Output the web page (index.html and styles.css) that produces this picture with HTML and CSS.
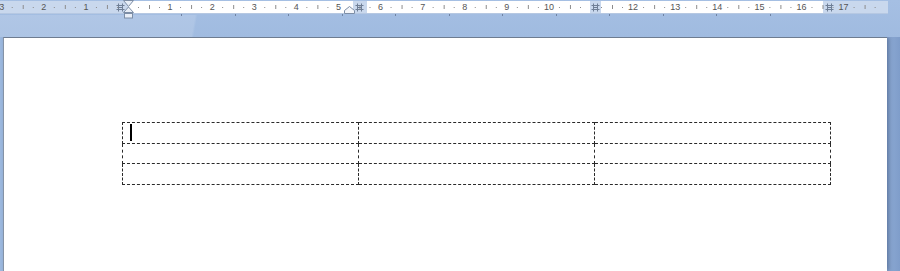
FILE: index.html
```html
<!DOCTYPE html>
<html>
<head>
<meta charset="utf-8">
<link rel="stylesheet" href="styles.css">
</head>
<body>
<div class="topbar">
  <div class="ruler">
    <div class="nums">
      <span>3</span><span>2</span><span>1</span><span></span><span>1</span><span>2</span><span>3</span><span>4</span><span>5</span><span>6</span><span>7</span><span>8</span><span>9</span><span>10</span><span></span><span>12</span><span>13</span><span>14</span><span>15</span><span>16</span><span>17</span>
    </div>
    <svg class="colmark m1" width="9" height="9" viewBox="0 0 9 9"><path d="M2.5 0.5V8.5M6.5 0.5V8.5M0.5 2.5H8.5M0.5 6.5H8.5M2.5 4.5H6.5" stroke="#6f7f96" stroke-width="1" fill="none"/></svg>
    <svg class="colmark m2" width="9" height="9" viewBox="0 0 9 9"><path d="M2.5 0.5V8.5M6.5 0.5V8.5M0.5 2.5H8.5M0.5 6.5H8.5M2.5 4.5H6.5" stroke="#6f7f96" stroke-width="1" fill="none"/></svg>
    <svg class="colmark m3" width="9" height="9" viewBox="0 0 9 9"><path d="M2.5 0.5V8.5M6.5 0.5V8.5M0.5 2.5H8.5M0.5 6.5H8.5M2.5 4.5H6.5" stroke="#6f7f96" stroke-width="1" fill="none"/></svg>
    <svg class="colmark m4" width="9" height="9" viewBox="0 0 9 9"><path d="M2.5 0.5V8.5M6.5 0.5V8.5M0.5 2.5H8.5M0.5 6.5H8.5M2.5 4.5H6.5" stroke="#6f7f96" stroke-width="1" fill="none"/></svg>
    <svg class="hourglass" width="11" height="19" viewBox="0 0 11 19"><path d="M0.5 0.5H10.5L5.5 6.5Z" fill="#e8eef7" stroke="#7d8ea6"/><path d="M5.5 7L0.5 12.5H10.5Z" fill="#e8eef7" stroke="#7d8ea6"/><rect x="1.5" y="13.5" width="8" height="4.5" fill="#e8eef7" stroke="#7d8ea6"/></svg>
    <svg class="hanging" width="11" height="8" viewBox="0 0 11 8"><path d="M0.5 7.5V4.5L5.5 0.5L10.5 4.5V7.5Z" fill="#f4f6fa" stroke="#7d8ea6"/></svg>
  </div>
  <div class="tabs"></div>
</div>
<div class="page">
  <table class="grid">
    <tr class="r1"><td><span class="caret"></span></td><td></td><td></td></tr>
    <tr class="r2"><td></td><td></td><td></td></tr>
    <tr class="r3"><td></td><td></td><td></td></tr>
  </table>
</div>
</body>
</html>
```
FILE: styles.css
```css
html, body {
  margin: 0;
  padding: 0;
}
body {
  width: 900px;
  height: 271px;
  overflow: hidden;
  background: linear-gradient(to right, #9db9df 0, #a3bee2 60%, #9cb8de 97%, #7f9dca 100%);
  font-family: "Liberation Sans", Arial, sans-serif;
}
.topbar {
  height: 37px;
  background: linear-gradient(to bottom, #a5bfe3 0, #a0bbe0 100%);
  position: relative;
}
.topbar::before {
  content: "";
  position: absolute;
  left: 0;
  top: 15px;
  width: 240px;
  height: 22px;
  background: linear-gradient(100deg, rgba(255,255,255,0.14) 0 80%, rgba(255,255,255,0) 81%);
}
.ruler {
  position: relative;
  top: 1px;
  width: 888px;
  height: 13px;
  box-sizing: border-box;
  border-bottom: 1px solid #b6c8e2;
  background:
    linear-gradient(to right, #8a8a8a 0 1px, transparent 1px) 149px 4px / 42.1px 4px repeat-x,
    linear-gradient(to right, #8a8a8a 0 1px, transparent 1px) 138px 6px / 21.05px 1px repeat-x,
    linear-gradient(to right, #c9d8ed 0 128px, #fff 128px 353px, #c9d8ed 353px 367px, #fff 367px 590px, #c9d8ed 590px 601px, #fff 601px 823px, #c9d8ed 823px 888px);
}
.nums {
  display: flex;
  margin-left: -19.35px;
  height: 12px;
  position: relative;
  z-index: 1;
  overflow: hidden;
}
.nums span {
  flex: 0 0 42.1px;
  text-align: center;
  font-size: 9px;
  line-height: 12px;
  color: #555;
}
.colmark {
  position: absolute;
  top: 2px;
  z-index: 2;
}
.m1 { left: 116px; }
.m2 { left: 355px; }
.m3 { left: 591px; }
.m4 { left: 825px; }
.hourglass {
  position: absolute;
  left: 123px;
  top: -1px;
  z-index: 3;
}
.hanging {
  position: absolute;
  left: 344px;
  top: 5px;
  z-index: 3;
}
.tabs {
  position: relative;
  top: 1px;
  margin-left: 181px;
  width: 642px;
  height: 2px;
  background: repeating-linear-gradient(to right, #6f83a3 0 1px, transparent 1px 53.5px);
}
.page {
  margin: 0 13px 0 3px;
  height: 234px;
  background: #fff;
  border-top: 1px solid #6e7c90;
  border-left: 1px solid #8593a6;
  box-shadow: 2px 0 4px rgba(40, 60, 100, 0.45);
  box-sizing: border-box;
  padding: 84px 0 0 118px;
}
.grid {
  border-collapse: collapse;
  table-layout: fixed;
  width: 709px;
}
.grid td {
  border: 1px dashed #2a2a2a;
  padding: 0;
  vertical-align: top;
}
.r1 td { height: 20px; }
.r2 td { height: 19px; }
.r3 td { height: 20px; }
.caret {
  display: block;
  width: 2px;
  height: 17px;
  margin: 1px 0 0 7px;
  background: #000;
}
```
